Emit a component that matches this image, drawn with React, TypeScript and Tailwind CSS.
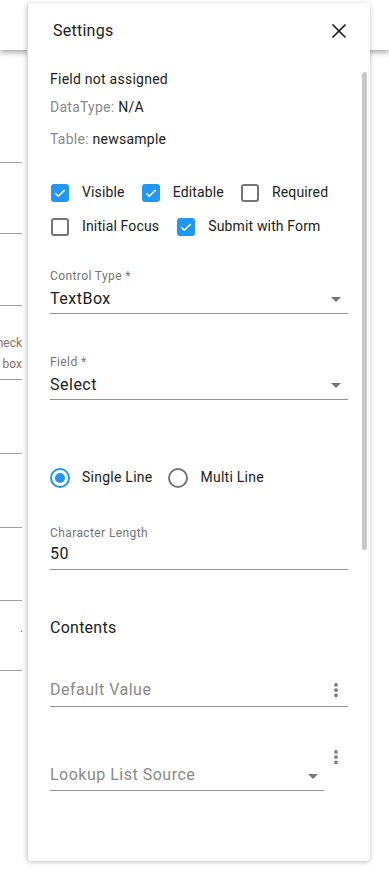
import { X, EllipsisVertical } from "lucide-react";

const font = { fontFamily: "Roboto, 'Liberation Sans', sans-serif" };

function Check({ on, label, className = "" }: { on: boolean; label: string; className?: string }) {
  return (
    <label className={"flex items-center " + className}>
      {on ? (
        <span className="w-[18px] h-[18px] rounded-[3px] bg-[#2196f3] flex items-center justify-center">
          <svg width="14" height="14" viewBox="0 0 24 24">
            <path d="M4 12.5l5 5L20 7" fill="none" stroke="white" strokeWidth="2.6" />
          </svg>
        </span>
      ) : (
        <span className="w-[18px] h-[18px] rounded-[3px] border-2 border-[#757575]" />
      )}
      <span className="ml-[13px] text-[14px] tracking-[0.15px] text-[#212121]">{label}</span>
    </label>
  );
}

function Radio({ on, label }: { on: boolean; label: string }) {
  return (
    <label className="flex items-center">
      <span
        className={
          "w-[20px] h-[20px] rounded-full border-2 flex items-center justify-center " +
          (on ? "border-[#2196f3]" : "border-[#757575]")
        }
      >
        {on && <span className="w-[10px] h-[10px] rounded-full bg-[#2196f3]" />}
      </span>
      <span className="ml-[12px] text-[14px] tracking-[0.25px] text-[#212121]">{label}</span>
    </label>
  );
}

function Caret() {
  return (
    <svg width="10" height="5" viewBox="0 0 10 5">
      <path d="M0 0h10L5 5z" fill="#757575" />
    </svg>
  );
}

function SelectField({ label, value }: { label: string; value: string }) {
  return (
    <div className="w-[298px]">
      <div className="text-[12px] tracking-[0.4px] text-[#757575] leading-[14px]">{label}</div>
      <div className="flex items-center justify-between border-b border-[#949494] h-[31px] pt-[3px] pb-[2px]">
        <span className="text-[16px] tracking-[0.5px] text-[#212121]">{value}</span>
        <span className="mr-[7px] mt-[2px]">
          <Caret />
        </span>
      </div>
    </div>
  );
}

export default function App() {
  const bgLines = [162, 233, 305, 379, 453, 527, 600, 670];
  return (
    <div className="relative w-[389px] h-[871px] bg-white overflow-hidden" style={font}>
      {/* page behind the drawer */}
      <div className="h-[50px] bg-white shadow-[0_2px_6px_rgba(0,0,0,0.4)]" />
      {bgLines.map((y) => (
        <div key={y} className="absolute left-0 w-[22px] h-[1px] bg-[#9e9e9e]" style={{ top: y }} />
      ))}
      <div className="absolute right-[367px] top-[333px] text-right text-[12px] leading-[21px] text-[#8d6e63]">
        heck
        <br />
        box
      </div>
      <div className="absolute left-[21px] top-[631px] w-[1px] h-[1px] bg-[#555]" />

      {/* settings drawer */}
      <div className="absolute left-[27px] top-[3px] w-[343px] h-[858px] bg-white rounded-[4px] border-l border-[#dcdcdc] shadow-[0_1px_5px_rgba(0,0,0,0.25)]">
        <div className="flex items-center justify-between pl-[25px] pr-[19px] h-[56px]">
          <span className="text-[16px] tracking-[0.25px] text-[#212121]">Settings</span>
          <X size={24} strokeWidth={1.75} className="text-[#212121]" />
        </div>

        <div className="absolute right-[3px] top-[69px] w-[5px] h-[478px] rounded-full bg-[#c8c8c8]" />

        <div className="pl-[22px]">
          <div className="text-[14px] tracking-[0.25px] text-[#212121] mt-[10px]">Field not assigned</div>
          <div className="text-[14px] tracking-[0.25px] mt-[7px]">
            <span className="text-[#8a8a8a]">DataType: </span>
            <span className="text-[#212121]">N/A</span>
          </div>
          <div className="text-[14px] tracking-[0.25px] mt-[11px]">
            <span className="text-[#8a8a8a]">Table: </span>
            <span className="text-[#212121]">newsample</span>
          </div>

          <div className="mt-[32px] flex items-center">
            <Check on label="Visible" className="ml-[1px]" />
            <Check on label="Editable" className="ml-[17px]" />
            <Check on={false} label="Required" className="ml-[17px]" />
          </div>
          <div className="mt-[13px] flex items-center">
            <Check on={false} label="Initial Focus" className="ml-[1px]" />
            <Check on label="Submit with Form" className="ml-[18px]" />
          </div>

          <div className="mt-[32px]">
            <SelectField label="Control Type  *" value="TextBox" />
          </div>
          <div className="mt-[41px]">
            <SelectField label="Field *" value="Select" />
          </div>

          <div className="mt-[67px] flex items-center gap-[16px]">
            <Radio on label="Single Line" />
            <Radio on={false} label="Multi Line" />
          </div>

          <div className="mt-[38px] w-[298px]">
            <div className="text-[12px] tracking-[0.4px] text-[#757575] leading-[14px]">Character Length</div>
            <div className="flex items-center border-b border-[#949494] h-[30px] pt-[1px] pb-[2px]">
              <span className="text-[16px] tracking-[0.5px] text-[#212121]">50</span>
            </div>
          </div>

          <div className="mt-[46px] text-[16px] tracking-[0.25px] text-[#212121]">Contents</div>

          <div className="mt-[36px] w-[298px] flex items-center justify-between border-b border-[#949494] h-[31px] pb-[2px]">
            <span className="text-[16px] tracking-[0.5px] text-[#8a8a8a]">Default Value</span>
            <EllipsisVertical size={18} strokeWidth={3} className="text-[#757575] mr-[3px]" />
          </div>

          <div className="mt-[38px] flex items-start w-[298px]">
            <div className="w-[274px] flex items-center justify-between border-b border-[#949494] h-[46px] pt-[16px] pb-[2px]">
              <span className="text-[16px] tracking-[0.5px] text-[#8a8a8a]">Lookup List Source</span>
              <span className="mr-[6px] mt-[4px]">
                <Caret />
              </span>
            </div>
            <EllipsisVertical size={18} strokeWidth={3} className="text-[#757575] ml-auto mr-[3px] mt-[3px]" />
          </div>
        </div>
      </div>
    </div>
  );
}
